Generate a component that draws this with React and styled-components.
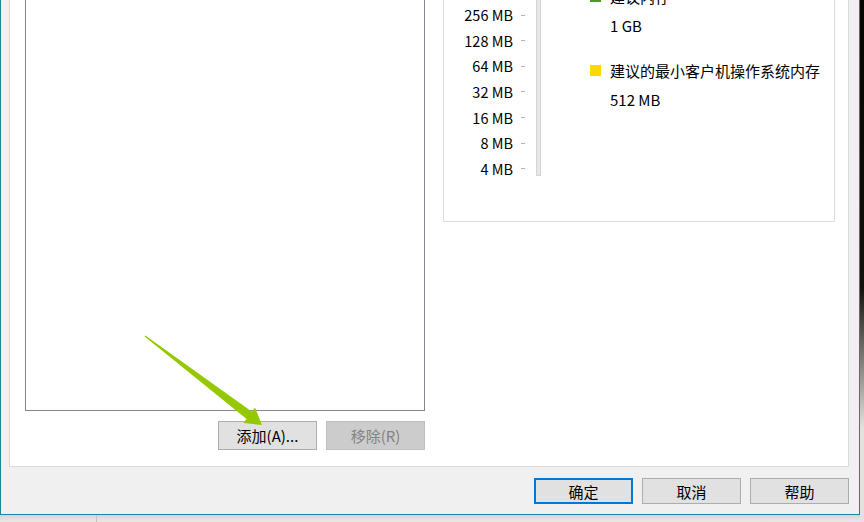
import React from 'react';
import styled, { createGlobalStyle } from 'styled-components';

const GlobalStyle = createGlobalStyle`
  html, body {
    margin: 0;
    padding: 0;
  }
  body {
    font-family: "Noto Sans CJK SC", "Noto Sans", sans-serif;
    font-size: 15px;
    color: #000;
  }
`;

const scale = ['256 MB', '128 MB', '64 MB', '32 MB', '16 MB', '8 MB', '4 MB'];

const legend = [
  { color: '#4f9a17', label: '建议内存', value: '1 GB' },
  { color: '#ffd800', label: '建议的最小客户机操作系统内存', value: '512 MB' },
];

export default function App() {
  return (
    <>
      <GlobalStyle />
      <Screen>
        <Window>
          <Panel>
            <LeftColumn>
              <ListBox />
              <ButtonRow>
                <Button>添加(A)...</Button>
                <Button disabled>移除(R)</Button>
              </ButtonRow>
            </LeftColumn>

            <RightColumn>
              <GroupBox>
                <Scale>
                  {scale.map((s) => (
                    <ScaleRow key={s}>
                      <ScaleLabel>{s}</ScaleLabel>
                      <Tick />
                    </ScaleRow>
                  ))}
                </Scale>
                <Track />
                <Legend>
                  {legend.map((l) => (
                    <LegendItem key={l.label}>
                      <LegendLabel>
                        <Swatch $color={l.color} />
                        {l.label}
                      </LegendLabel>
                      <LegendValue>{l.value}</LegendValue>
                    </LegendItem>
                  ))}
                </Legend>
              </GroupBox>
            </RightColumn>
          </Panel>

          <Footer>
            <DialogButton $primary>确定</DialogButton>
            <DialogButton>取消</DialogButton>
            <DialogButton>帮助</DialogButton>
          </Footer>
        </Window>

        <BelowStrip>
          <StripCell />
        </BelowStrip>

        {/* annotation arrow drawn over the dialog */}
        <Arrow viewBox="0 0 864 522" width="864" height="522">
          <polygon
            points="144.6,336.5 145.4,335.5 252,411.7 255,407.6 262,425 243.5,423 246.6,418.9"
            fill="#94c800"
          />
        </Arrow>
      </Screen>
    </>
  );
}

const Screen = styled.div`
  position: relative;
  width: 864px;
  height: 522px;
  overflow: hidden;
  display: flex;
  flex-direction: column;
  background: linear-gradient(to bottom, #050505 0%, #111 55%, #e2e2e2 82%);
`;

const Window = styled.div`
  box-sizing: border-box;
  width: 860px;
  height: 555px;
  margin-top: -40px;
  flex-shrink: 0;
  display: flex;
  flex-direction: column;
  padding: 0 10px 10px 8px;
  background: #f0f0f0;
  border: 1px solid #17869a;
  border-top: none;
`;

const Panel = styled.div`
  box-sizing: border-box;
  height: 507px;
  display: flex;
  gap: 18px;
  padding: 0 13px 16px 15px;
  background: #fff;
  border: 1px solid #d9d9d9;
`;

const LeftColumn = styled.div`
  width: 400px;
  display: flex;
  flex-direction: column;
`;

const ListBox = styled.div`
  flex: 1;
  box-sizing: border-box;
  background: #fff;
  border: 1px solid #828790;
`;

const ButtonRow = styled.div`
  display: flex;
  justify-content: flex-end;
  gap: 9px;
  margin-top: 10px;
`;

const Button = styled.button`
  box-sizing: border-box;
  width: 99px;
  height: 29px;
  padding: 0;
  font-family: inherit;
  font-size: 15px;
  color: #000;
  background: #e1e1e1;
  border: 1px solid #adadad;
  &:disabled {
    color: #838383;
    background: #cccccc;
    border-color: #bfbfbf;
  }
`;

const RightColumn = styled.div`
  width: 392px;
  align-self: flex-start;
`;

const GroupBox = styled.div`
  box-sizing: border-box;
  height: 261px;
  display: flex;
  align-items: flex-start;
  border: 1px solid #dcdcdc;
  border-top: none;
`;

const Scale = styled.div`
  width: 81px;
  padding-top: 41.2px;
  display: flex;
  flex-direction: column;
`;

const ScaleRow = styled.div`
  height: 25.67px;
  display: flex;
  align-items: center;
  justify-content: flex-end;
`;

const ScaleLabel = styled.span`
  font-size: 14.5px;
  line-height: 20px;
  color: #000;
`;

const Tick = styled.span`
  width: 4px;
  height: 1px;
  margin-left: 8px;
  background: #b4b4b4;
`;

const Track = styled.div`
  box-sizing: border-box;
  width: 5px;
  height: 215px;
  margin-left: 11px;
  background: #e7e7e7;
  border: 1px solid #d4d4d4;
  border-top: none;
`;

const Legend = styled.div`
  margin-left: 49px;
  padding-top: 25.5px;
  display: flex;
  flex-direction: column;
  gap: 25px;
`;

const LegendItem = styled.div`
  display: flex;
  flex-direction: column;
  gap: 9px;
`;

const LegendLabel = styled.div`
  height: 20px;
  display: flex;
  align-items: center;
  gap: 9px;
  line-height: 20px;
  white-space: nowrap;
`;

const Swatch = styled.span`
  width: 11px;
  height: 11px;
  flex-shrink: 0;
  background: ${(p) => p.$color};
`;

const LegendValue = styled.div`
  padding-left: 20px;
  line-height: 20px;
`;

const Footer = styled.div`
  display: flex;
  justify-content: flex-end;
  gap: 9px;
  margin-top: 11px;
`;

const DialogButton = styled.button`
  box-sizing: border-box;
  width: 99px;
  height: 26px;
  padding: 0;
  font-family: inherit;
  font-size: 15px;
  color: #000;
  background: #e1e1e1;
  border: ${(p) => (p.$primary ? '2px solid #0078d7' : '1px solid #adadad')};
`;

const BelowStrip = styled.div`
  flex: 1;
  width: 860px;
  display: flex;
  background: linear-gradient(to bottom, #d6d6d6, #e8e8e8);
`;

const StripCell = styled.div`
  width: 96px;
  border-right: 1px solid #c2c2c2;
`;

const Arrow = styled.svg`
  position: absolute;
  left: 0;
  top: 0;
  pointer-events: none;
`;
